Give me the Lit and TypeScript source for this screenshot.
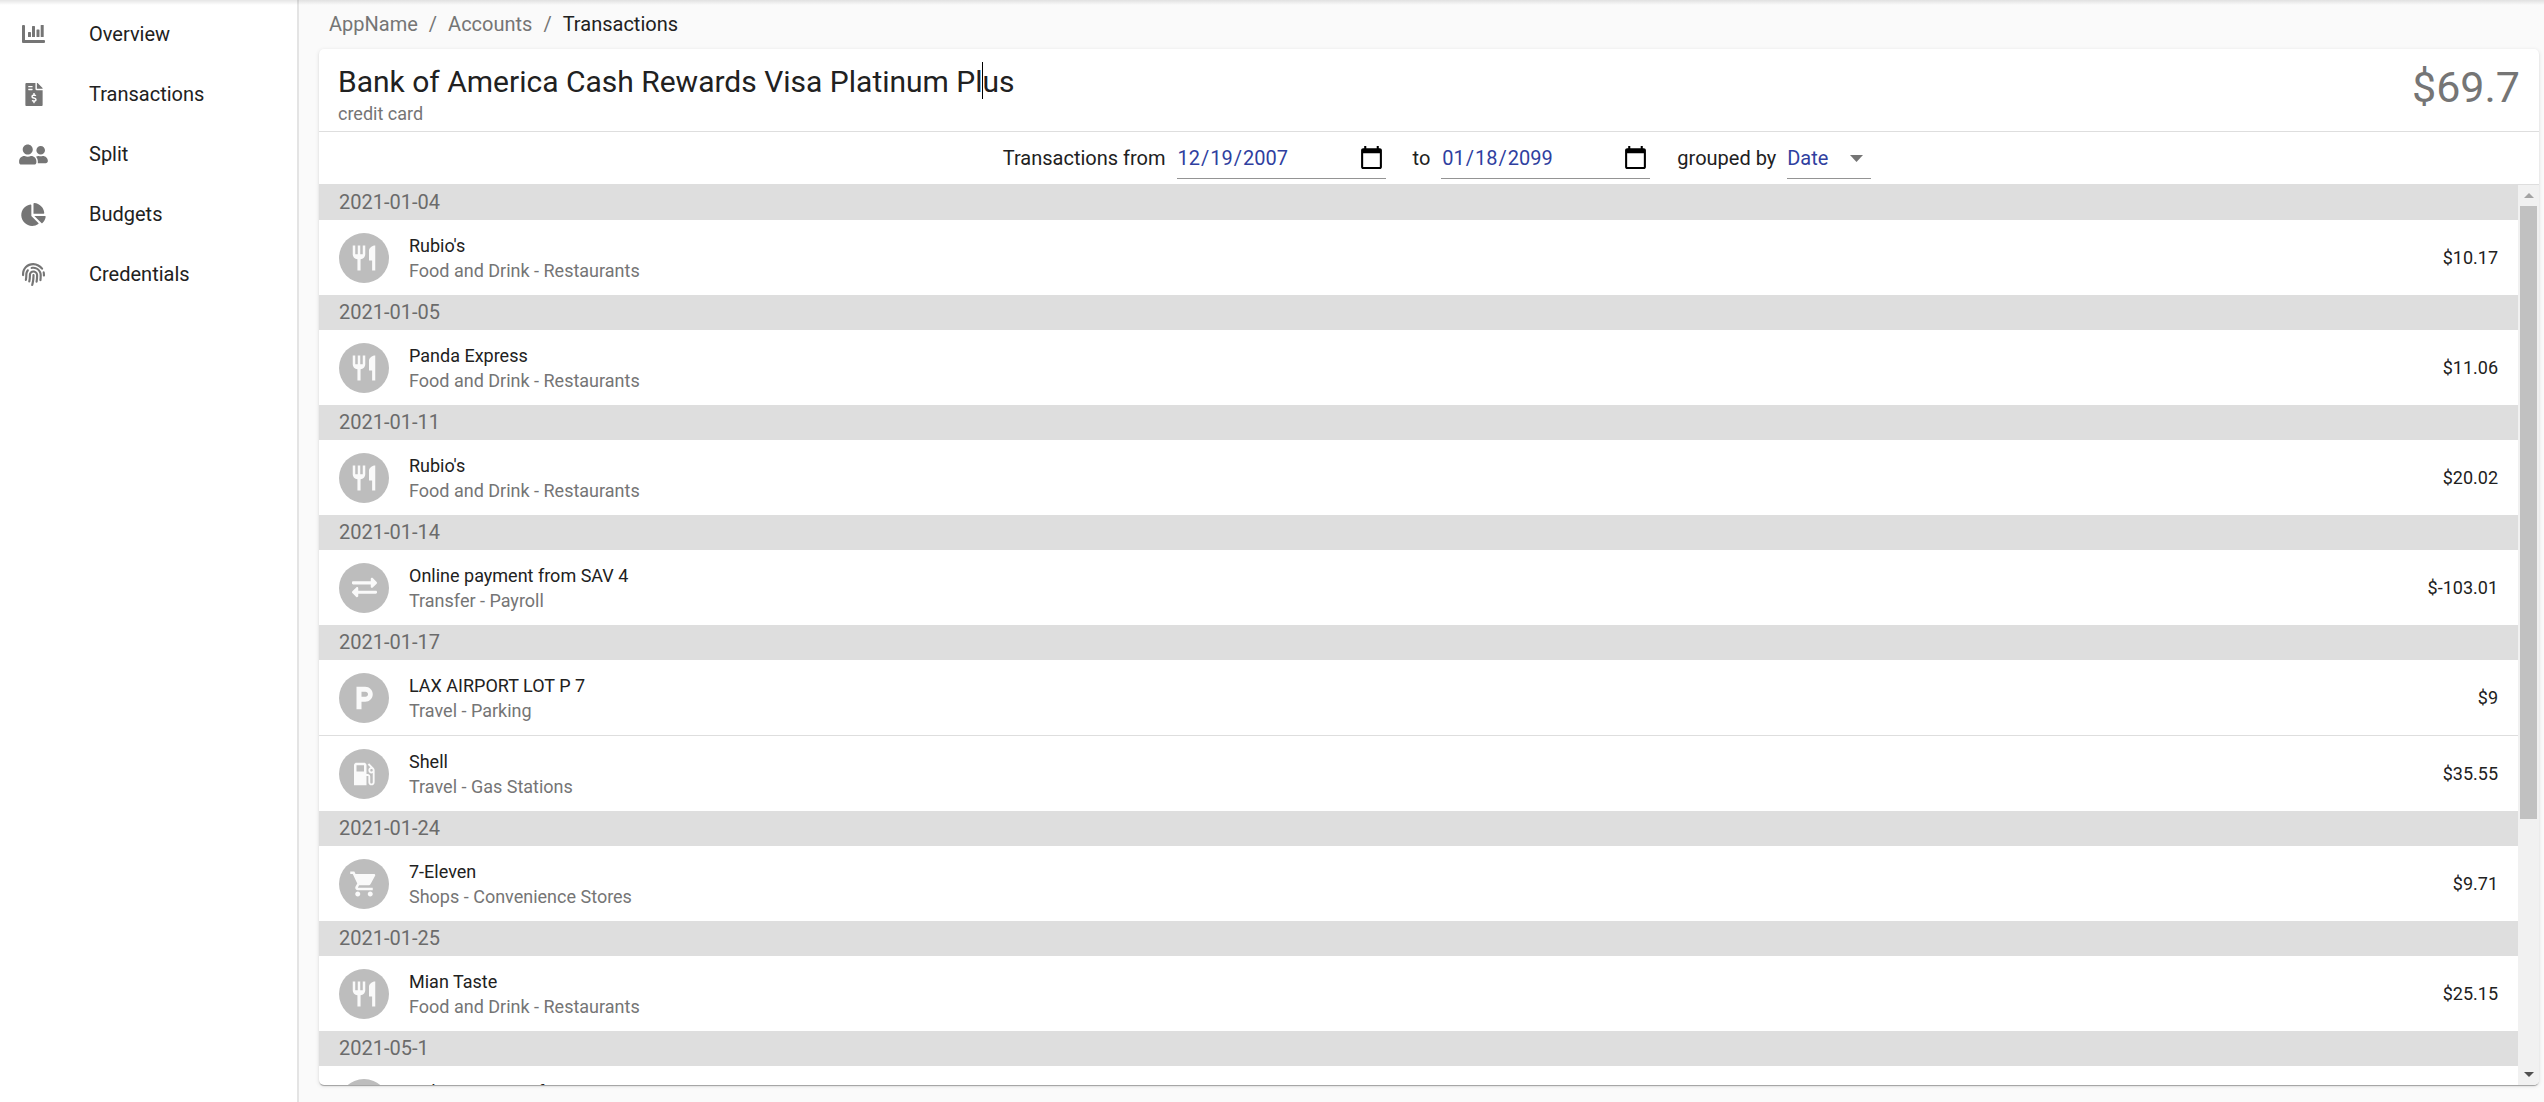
import { LitElement, html, css, svg } from "lit";
import { customElement, query } from "lit/decorators.js";

interface Transaction {
  name: string;
  category: string;
  amount: string;
  icon: string;
}

interface Group {
  date: string;
  items: Transaction[];
}

const NAV_ICONS: Record<string, unknown> = {
  overview: svg`<svg class="nav-svg" viewBox="0 0 23 18" width="23" height="18">
    <path d="M1 0h1a1 1 0 0 1 1 1v14h19a1 1 0 0 1 1 1v1a1 1 0 0 1-1 1H1a1 1 0 0 1-1-1V1a1 1 0 0 1 1-1z"/>
    <rect x="6" y="7" width="3" height="5" rx=".6"/><rect x="10" y="1" width="3" height="11" rx=".6"/>
    <rect x="14.5" y="4.5" width="3" height="7.500" rx=".6"/><rect x="18.700" y="0" width="3" height="12" rx=".6"/></svg>`,
  transactions: svg`<svg class="nav-svg" viewBox="0 0 384 512" width="18" height="23"><path d="M377 105L279.1 7c-4.5-4.5-10.6-7-17-7H256v128h128v-6.1c0-6.3-2.5-12.4-7-16.9zm-153 31V0H24C10.7 0 0 10.7 0 24v464c0 13.3 10.7 24 24 24h336c13.3 0 24-10.7 24-24V160H248c-13.2 0-24-10.8-24-24zM64 72c0-4.42 3.58-8 8-8h80c4.42 0 8 3.58 8 8v16c0 4.42-3.58 8-8 8H72c-4.42 0-8-3.58-8-8V72zm0 80v-16c0-4.42 3.58-8 8-8h80c4.42 0 8 3.58 8 8v16c0 4.42-3.58 8-8 8H72c-4.42 0-8-3.58-8-8zm144 263.88V440c0 4.42-3.58 8-8 8h-16c-4.42 0-8-3.58-8-8v-24.29c-11.29-.58-22.27-4.52-31.37-11.35-3.9-2.93-4.1-8.77-.57-12.14l11.75-11.21c2.77-2.64 6.89-2.76 10.13-.73 3.87 2.42 8.26 3.72 12.82 3.72h28.11c6.5 0 11.8-5.92 11.8-13.19 0-5.95-3.61-11.19-8.77-12.73l-45-13.5c-18.59-5.58-31.58-23.42-31.58-43.39 0-24.52 19.05-44.44 42.67-45.07V232c0-4.42 3.58-8 8-8h16c4.42 0 8 3.58 8 8v24.29c11.29.58 22.27 4.51 31.37 11.35 3.9 2.93 4.1 8.77.57 12.14l-11.75 11.21c-2.77 2.64-6.89 2.76-10.13.73-3.87-2.43-8.26-3.72-12.82-3.72h-28.11c-6.5 0-11.8 5.92-11.8 13.19 0 5.95 3.61 11.19 8.77 12.73l45 13.5c18.59 5.58 31.58 23.42 31.58 43.39 0 24.53-19.05 44.44-42.67 45.07z"/></svg>`,
  split: svg`<svg class="nav-svg" viewBox="0 0 640 512" width="29" height="23"><path d="M192 256c61.9 0 112-50.1 112-112S253.900 32 192 32 80 82.100 80 144s50.100 112 112 112zm76.800 32h-8.300c-20.800 10-43.900 16-68.500 16s-47.600-6-68.500-16h-8.300C51.600 288 0 339.600 0 403.200V432c0 26.500 21.500 48 48 48h288c26.500 0 48-21.500 48-48v-28.800c0-63.600-51.600-115.200-115.200-115.200zM480 256c53 0 96-43 96-96s-43-96-96-96-96 43-96 96 43 96 96 96zm48 32h-3.800c-13.900 4.800-28.600 8-44.200 8s-30.300-3.200-44.200-8H432c-20.400 0-39.200 5.900-55.700 15.400 24.400 26.300 39.700 61.200 39.700 99.800v38.400c0 2.200-.5 4.300-.6 6.400H592c26.500 0 48-21.500 48-48 0-61.900-50.100-112-112-112z"/></svg>`,
  budgets: svg`<svg class="nav-svg" viewBox="0 0 544 512" width="25" height="23"><path d="M527.790 288H290.500l158.030 158.030c6.040 6.040 15.980 6.530 22.190.68 38.700-36.460 65.320-85.610 73.130-140.860 1.340-9.460-6.510-17.850-16.060-17.850zm-15.830-64.800C503.720 103.740 408.260 8.280 288.800.04 279.680-.59 272 7.100 272 16.240V240h223.770c9.140 0 16.820-7.680 16.190-16.800zM224 288V50.710c0-9.550-8.390-17.400-17.840-16.060C86.990 51.490-4.100 155.600.14 280.370 4.500 408.510 114.830 513.590 243.030 511.980c50.400-.63 96.970-16.870 135.260-44.030 7.900-5.600 8.420-17.230 1.570-24.080L224 288z"/></svg>`,
  credentials: svg`<svg class="nav-svg" viewBox="0 0 512 512" width="23" height="23"><path d="M256.12 245.96c-13.25 0-24 10.74-24 24 1.14 72.25-8.14 141.9-27.7 211.55-2.73 9.72 2.15 30.49 23.12 30.49 10.48 0 20.11-6.92 23.09-17.52 13.53-47.91 31.04-125.41 29.48-224.52.01-13.25-10.73-24-23.99-24zm-.86-81.73C194 164.16 151.25 211.3 152.1 265.32c.75 47.94-3.75 95.91-13.37 142.55-2.69 12.98 5.67 25.69 18.64 28.36 13.05 2.67 25.67-5.66 28.36-18.64 10.34-50.09 15.17-101.58 14.37-153.02-.41-25.95 19.92-52.49 54.45-52.34 31.31.47 57.15 25.34 57.62 55.47.77 48.05-2.81 96.33-10.61 143.55-2.17 13.06 6.69 25.42 19.76 27.58 19.97 3.33 26.81-15.1 27.58-19.77 8.28-50.03 12.06-101.21 11.27-152.11-.88-55.8-47.94-101.88-104.91-102.72zm-110.69-19.78c-10.3-8.34-25.37-6.8-33.76 3.48-25.62 31.5-39.39 71.28-38.75 112 .59 37.58-2.47 75.27-9.11 112.05-2.34 13.05 6.31 25.53 19.36 27.89 20.11 3.5 27.07-14.81 27.89-19.36 7.19-39.84 10.5-80.66 9.86-121.33-.47-29.88 9.2-57.88 28-80.97 8.35-10.28 6.79-25.39-3.49-33.76zm109.47-62.33c-15.41-.41-30.87 1.44-45.78 4.97-12.89 3.06-20.87 15.98-17.83 28.89 3.06 12.89 16 20.83 28.89 17.83 11.05-2.61 22.47-3.77 34-3.69 75.43 1.13 137.73 61.5 138.88 134.58.59 37.88-1.28 76.11-5.58 113.63-1.5 13.17 7.95 25.08 21.11 26.58 16.72 1.95 25.51-11.88 26.58-21.11a929.06 929.06 0 0 0 5.89-119.85c-1.56-98.75-85.07-180.33-186.16-181.83zm252.07 121.45c-2.86-12.92-15.51-21.2-28.61-18.27-12.94 2.86-21.12 15.66-18.26 28.61 4.71 21.41 4.91 37.41 4.7 61.6-.11 13.27 10.55 24.09 23.8 24.2h.2c13.17 0 23.89-10.61 24-23.8.18-22.18.4-44.11-5.83-72.34zm-40.12-90.72C417.29 43.46 337.6 1.29 252.81.02 183.02-.82 118.47 24.91 70.46 72.94 24.09 119.37-.9 181.04.14 246.65l-.12 21.47c-.39 13.25 10.03 24.31 23.28 24.69.23.02.48.02.72.02 12.92 0 23.59-10.3 23.97-23.3l.16-23.64c-.83-52.5 19.16-101.86 56.28-139 38.76-38.8 91.34-59.67 147.68-58.86 69.45 1.03 134.73 35.56 174.62 92.39 7.61 10.86 22.56 13.45 33.42 5.86 10.84-7.62 13.46-22.59 5.84-33.43z"/></svg>`,
};

const CATEGORY_ICONS: Record<string, unknown> = {
  food: svg`<svg viewBox="0 0 24 24" width="30" height="30"><path d="M11 9H9V2H7v7H5V2H3v7c0 2.120 1.660 3.840 3.750 3.970V22h2.500v-9.030C11.340 12.840 13 11.120 13 9V2h-2v7zm5-3v8h2.500v8H21V2c-2.760 0-5 2.240-5 4z"/></svg>`,
  transfer: svg`<svg viewBox="0 0 512 512" width="25" height="25"><path d="M0 168v-16c0-13.255 10.745-24 24-24h360V80c0-21.367 25.899-32.042 40.971-16.971l80 80c9.372 9.373 9.372 24.569 0 33.941l-80 80C409.956 271.982 384 261.456 384 240v-48H24c-13.255 0-24-10.745-24-24zm488 152H128v-48c0-21.314-25.862-32.08-40.971-16.971l-80 80c-9.372 9.373-9.372 24.569 0 33.941l80 80C102.057 463.997 128 453.437 128 432v-48h360c13.255 0 24-10.745 24-24v-16c0-13.255-10.745-24-24-24z"/></svg>`,
  parking: svg`<svg viewBox="0 0 24 24" width="30" height="30"><path d="M13 3H6v18h4v-6h3c3.310 0 6-2.690 6-6s-2.690-6-6-6zm.2 8H10V7h3.200c1.100 0 2 .9 2 2s-.9 2-2 2z"/></svg>`,
  gas: svg`<svg viewBox="0 0 24 24" width="30" height="30"><path d="M19.770 7.230l.01-.01-3.720-3.720L15 4.560l2.110 2.110c-.94.36-1.610 1.260-1.610 2.330 0 1.380 1.120 2.500 2.500 2.500.36 0 .69-.08 1-.21v7.210c0 .55-.45 1-1 1s-1-.45-1-1V14c0-1.100-.9-2-2-2h-1V5c0-1.100-.9-2-2-2H6c-1.100 0-2 .9-2 2v16h10v-7.500h1.500v5c0 1.380 1.120 2.500 2.500 2.500s2.500-1.120 2.500-2.500V9c0-.69-.28-1.320-.73-1.770zM12 10H6V5h6v5zm6 0c-.55 0-1-.45-1-1s.45-1 1-1 1 .45 1 1-.45 1-1 1z"/></svg>`,
  shop: svg`<svg viewBox="0 0 24 24" width="30" height="30"><path d="M7 18c-1.100 0-1.990.9-1.990 2S5.900 22 7 22s2-.9 2-2-.9-2-2-2zM1 2v2h2l3.600 7.590-1.350 2.450c-.16.28-.25.61-.25.96 0 1.100.9 2 2 2h12v-2H7.420c-.14 0-.25-.11-.25-.25l.03-.12.9-1.630h7.450c.75 0 1.410-.41 1.750-1.030l3.580-6.490c.08-.14.12-.31.12-.48 0-.55-.45-1-1-1H5.210l-.94-2H1zm16 16c-1.100 0-1.990.9-1.990 2s.89 2 1.990 2 2-.9 2-2-.9-2-2-2z"/></svg>`,
};

const NAV = [
  { id: "overview", label: "Overview" },
  { id: "transactions", label: "Transactions" },
  { id: "split", label: "Split" },
  { id: "budgets", label: "Budgets" },
  { id: "credentials", label: "Credentials" },
];

const FOOD = "Food and Drink - Restaurants";

const GROUPS: Group[] = [
  { date: "2021-01-04", items: [{ name: "Rubio's", category: FOOD, amount: "$10.17", icon: "food" }] },
  { date: "2021-01-05", items: [{ name: "Panda Express", category: FOOD, amount: "$11.06", icon: "food" }] },
  { date: "2021-01-11", items: [{ name: "Rubio's", category: FOOD, amount: "$20.02", icon: "food" }] },
  { date: "2021-01-14", items: [{ name: "Online payment from SAV 4", category: "Transfer - Payroll", amount: "$-103.01", icon: "transfer" }] },
  {
    date: "2021-01-17",
    items: [
      { name: "LAX AIRPORT LOT P 7", category: "Travel - Parking", amount: "$9", icon: "parking" },
      { name: "Shell", category: "Travel - Gas Stations", amount: "$35.55", icon: "gas" },
    ],
  },
  { date: "2021-01-24", items: [{ name: "7-Eleven", category: "Shops - Convenience Stores", amount: "$9.71", icon: "shop" }] },
  { date: "2021-01-25", items: [{ name: "Mian Taste", category: FOOD, amount: "$25.15", icon: "food" }] },
  { date: "2021-05-1", items: [{ name: "Online payment from SAV 4", category: "Transfer - Payroll", amount: "$-103.01", icon: "transfer" }] },
];

@customElement("side-nav")
class SideNav extends LitElement {
  static styles = css`
    :host { display: block; }
    .list { margin: 0; padding: 4px 0 0; list-style: none; }
    .link {
      display: flex; align-items: center; height: 60px;
      font-size: 20px; line-height: 30px; color: #212121; text-decoration: none;
    }
    .icon { display: flex; justify-content: center; width: 67px; margin-right: 22px; }
    .nav-svg { display: block; fill: #757575; }
  `;

  render() {
    return html`<nav aria-label="Main">
      <ul class="list">
        ${NAV.map((n) => html`<li><a class="link" href="#${n.id}"><span class="icon">${NAV_ICONS[n.id]}</span>${n.label}</a></li>`)}
      </ul>
    </nav>`;
  }
}

@customElement("transaction-list")
class TransactionList extends LitElement {
  @query(".scroller") scroller!: HTMLElement;

  static styles = css`
    :host { display: flex; min-height: 0; border-top: 1px solid #dedede; }
    .scroller { flex: 1; min-width: 0; overflow-y: auto; scrollbar-width: none; }
    .date {
      margin: 0; padding: 0 20px; background: #dedede; color: #6b6b6b;
      font-size: 20px; font-weight: 400; line-height: 35px;
    }
    .items { margin: 0; padding: 0; list-style: none; }
    .row { display: flex; align-items: center; gap: 20px; height: 75px; padding: 0 20px; }
    .row + .row { border-top: 1px solid #dedede; }
    .avatar {
      display: flex; align-items: center; justify-content: center; flex: none;
      width: 50px; height: 50px; border-radius: 50%; background: #bdbdbd; fill: #fafafa;
    }
    .text { flex: 1; font-size: 18px; line-height: 25px; color: #212121; }
    .category { color: #757575; }
    .amount { font-size: 18px; line-height: 25px; color: #212121; }
    .bar { display: flex; flex-direction: column; width: 21px; background: #f1f1f1; }
    .arrow {
      display: flex; align-items: center; justify-content: center;
      height: 21px; padding: 0; border: 0; background: none; fill: #505050;
    }
    .arrow.up { fill: #a3a3a3; }
    .track { flex: 1; display: flex; flex-direction: column; padding: 0 2px; }
    .thumb { flex: 5; background: #c1c1c1; }
    .rest { flex: 2; }
  `;

  private scrollStep(delta: number) {
    this.scroller.scrollBy({ top: delta });
  }

  render() {
    return html`
      <div class="scroller">
        ${GROUPS.map(
          (g) => html`<section>
            <h2 class="date">${g.date}</h2>
            <ul class="items">
              ${g.items.map(
                (t) => html`<li class="row">
                  <span class="avatar">${CATEGORY_ICONS[t.icon]}</span>
                  <div class="text"><div>${t.name}</div><div class="category">${t.category}</div></div>
                  <span class="amount">${t.amount}</span>
                </li>`
              )}
            </ul>
          </section>`
        )}
      </div>
      <div class="bar">
        <button class="arrow up" aria-label="Scroll up" @click=${() => this.scrollStep(-75)}>
          <svg width="10" height="5" viewBox="0 0 10 5"><path d="M0 5l5-5 5 5z" /></svg>
        </button>
        <div class="track"><div class="thumb"></div><div class="rest"></div></div>
        <button class="arrow" aria-label="Scroll down" @click=${() => this.scrollStep(75)}>
          <svg width="10" height="5" viewBox="0 0 10 5"><path d="M0 0l5 5 5-5z" /></svg>
        </button>
      </div>
    `;
  }
}

@customElement("app-root")
class AppRoot extends LitElement {
  static styles = css`
    :host {
      position: relative; display: flex; height: 100vh; background: #fafafa; overflow: hidden;
      font-family: Roboto, "Liberation Sans", sans-serif; color: #212121;
    }
    .top-shadow {
      position: absolute; top: 0; left: 0; right: 0; height: 5px; pointer-events: none;
      background: linear-gradient(rgba(0, 0, 0, 0.1), rgba(0, 0, 0, 0));
    }
    .side { flex: none; width: 297px; background: #fff; border-right: 2px solid #e4e4e4; }
    .main { flex: 1; min-width: 0; display: flex; flex-direction: column; padding: 9px 5px 17px 20px; }
    .crumbs { display: flex; gap: 11px; margin: 0 0 10px; padding: 0 10px; list-style: none; font-size: 20px; line-height: 30px; color: #757575; }
    .crumb { color: inherit; text-decoration: none; }
    .current { color: #212121; }
    .card {
      flex: 1; min-height: 0; display: flex; flex-direction: column; background: #fff; border-radius: 5px; overflow: hidden;
      box-shadow: 0 2px 1px -1px rgba(0, 0, 0, 0.2), 0 1px 1px rgba(0, 0, 0, 0.14), 0 1px 4px rgba(0, 0, 0, 0.12);
    }
    .head { display: flex; justify-content: space-between; padding: 13px 19px 5px; border-bottom: 1px solid #dedede; }
    .title { margin: 0; font-size: 30px; font-weight: 400; line-height: 40px; }
    .caret { display: inline-block; width: 1px; height: 37px; margin: 0 0 0 -1px; background: #000; vertical-align: top; }
    .kind { margin: 0; font-size: 18px; line-height: 24px; color: #757575; }
    .balance { font-size: 43px; line-height: 50px; color: #757575; }
    .filters { display: flex; align-items: center; justify-content: center; gap: 27px; padding: 5px 0 5px 16px; font-size: 20px; }
    .field { display: flex; align-items: center; gap: 11px; line-height: 30px; }
    .control {
      height: 42px; box-sizing: border-box; margin: 0; padding: 0; border: 0; border-bottom: 1px solid #949494; border-radius: 0;
      background: transparent; font: inherit; color: #303f9f; outline: none;
    }
    .date { width: 209px; padding-right: 2px; }
    .date::-webkit-calendar-picker-indicator { width: 25px; height: 25px; padding: 0; background-size: 25px 25px; }
    .select-wrap { display: grid; align-items: center; }
    .select { grid-area: 1 / 1; width: 84px; appearance: none; }
    .tri { grid-area: 1 / 1; justify-self: end; margin-right: 8px; fill: #757575; pointer-events: none; }
    .list { flex: 1; }
  `;

  render() {
    return html`
      <aside class="side"><side-nav></side-nav></aside>
      <main class="main">
        <nav aria-label="Breadcrumb">
          <ol class="crumbs">
            <li><a class="crumb" href="#home">AppName</a></li>
            <li aria-hidden="true">/</li>
            <li><a class="crumb" href="#accounts">Accounts</a></li>
            <li aria-hidden="true">/</li>
            <li class="current" aria-current="page">Transactions</li>
          </ol>
        </nav>
        <article class="card">
          <header class="head">
            <div>
              <h1 class="title">Bank of America Cash Rewards Visa Platinum Pl<span class="caret"></span>us</h1>
              <p class="kind">credit card</p>
            </div>
            <div class="balance">$69.7</div>
          </header>
          <form class="filters">
            <div class="field">
              <label for="from">Transactions from</label>
              <input class="control date" id="from" type="date" value="2007-12-19" />
            </div>
            <div class="field">
              <label for="to">to</label>
              <input class="control date" id="to" type="date" value="2099-01-18" />
            </div>
            <div class="field">
              <label for="group">grouped by</label>
              <span class="select-wrap">
                <select class="control select" id="group"><option>Date</option></select>
                <svg class="tri" width="13" height="7" viewBox="0 0 13 7"><path d="M0 0h13L6.500 7z" /></svg>
              </span>
            </div>
          </form>
          <transaction-list class="list"></transaction-list>
        </article>
      </main>
      <div class="top-shadow"></div>
    `;
  }
}
